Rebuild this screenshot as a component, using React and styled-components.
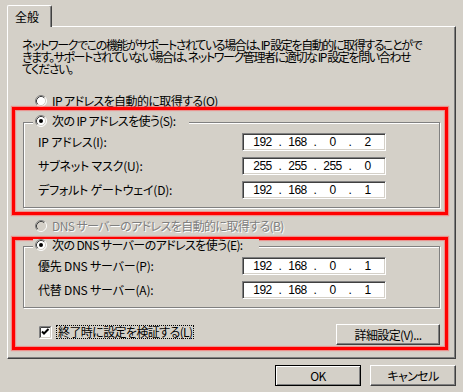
import React from "react";
import styled, { createGlobalStyle } from "styled-components";

const GlobalStyle = createGlobalStyle`
	html, body {
		margin: 0;
		background: #d4d0c8;
	}
	body {
		font-family: "Noto Sans CJK JP", "Noto Sans", sans-serif;
		font-size: 12px;
		line-height: 12px;
		color: #000;
		font-feature-settings: "palt";
		letter-spacing: -0.6px;
	}
`;

const Dialog = styled.div`
	width: 463px;
	height: 392px;
	box-sizing: border-box;
	padding: 5px 0 0 7px;
`;

const TabStrip = styled.div`
	display: flex;
	height: 21px;
	position: relative;
	z-index: 1;
`;

const Tab = styled.div`
	width: 45px;
	height: 22px;
	box-sizing: border-box;
	background: #d4d0c8;
	border-top: 1px solid #fff;
	border-left: 1px solid #fff;
	border-right: 1px solid #404040;
	border-radius: 2px 2px 0 0;
	box-shadow: inset -1px 0 0 #808080;
	padding: 5px 0 0 7px;
	letter-spacing: 0;
`;

const Panel = styled.div`
	width: 449px;
	height: 333px;
	box-sizing: border-box;
	border-top: 1px solid #fff;
	border-left: 1px solid #fff;
	border-right: 1px solid #404040;
	border-bottom: 1px solid #404040;
	box-shadow: inset -1px -1px 0 #808080;
	display: flex;
	flex-direction: column;
	align-items: flex-start;
`;

const Description = styled.p`
	margin: 12px 0 0 14px;
	white-space: nowrap;
	line-height: 12px;
	letter-spacing: -1.4px;
`;

const OptionRow = styled.div`
	display: flex;
	align-items: center;
	gap: 5px;
	height: 12px;
	margin: ${(p) => p.$top}px 0 0 27px;
	white-space: nowrap;
	color: ${(p) => (p.$disabled ? "#808080" : "#000")};
	text-shadow: ${(p) => (p.$disabled ? "1px 1px 0 #fff" : "none")};
`;

const RedFrame = styled.div`
	margin: ${(p) => p.$top}px 0 0 4px;
	width: 436px;
	box-sizing: border-box;
	border: 3px solid #ff0000;
	box-shadow: 0 0 1px 1px rgba(255, 90, 90, 0.55),
		inset 0 0 1px 1px rgba(255, 90, 90, 0.55);
	display: flex;
	flex-direction: column;
`;

const Group = styled.div`
	position: relative;
	margin: ${(p) => p.$top}px 5px ${(p) => p.$bottom}px 8px;
	border: 1px solid #808080;
	box-shadow: inset 1px 1px 0 #fff, 1px 1px 0 #fff;
	padding: 10px 0 8px 14px;
	display: flex;
	flex-direction: column;
	gap: 6px;
`;

const Legend = styled.div`
	position: absolute;
	top: -8px;
	left: 9px;
	width: ${(p) => p.$width}px;
	height: 12px;
	box-sizing: border-box;
	padding-left: 2px;
	background: #d4d0c8;
	display: flex;
	align-items: center;
	gap: 5px;
	white-space: nowrap;
`;

const FieldRow = styled.div`
	display: flex;
	align-items: center;
	height: 18px;
`;

const FieldLabel = styled.span`
	width: 204px;
	white-space: nowrap;
	letter-spacing: -0.2px;
`;

const IpField = styled.div`
	width: 144px;
	height: 18px;
	box-sizing: border-box;
	background: #fff;
	border-top: 1px solid #808080;
	border-left: 1px solid #808080;
	border-bottom: 1px solid #fff;
	border-right: 1px solid #fff;
	box-shadow: inset 1px 1px 0 #404040, inset -1px -1px 0 #d4d0c8;
	display: flex;
	align-items: center;
	padding-left: 2px;
	font-family: "Liberation Sans", sans-serif;
	font-size: 12px;
	letter-spacing: -0.5px;
`;

const Octet = styled.span`
	flex: 1;
	text-align: center;
`;

const Dot = styled.span`
	width: 0;
	display: flex;
	justify-content: center;
`;

const Footer = styled.div`
	display: flex;
	justify-content: space-between;
	align-items: flex-start;
	height: 21px;
	margin: 16px 5px 2px 24px;
`;

const CheckLine = styled.label`
	display: flex;
	align-items: center;
	gap: 4px;
	margin-top: 1px;
`;

const CheckText = styled.span`
	border: 1px dotted #000;
	padding: 0 1px;
	line-height: 12px;
	white-space: nowrap;
`;

const Button = styled.button`
	width: ${(p) => p.$width}px;
	height: 21px;
	box-sizing: border-box;
	padding: 0;
	background: #d4d0c8;
	font: inherit;
	letter-spacing: inherit;
	font-feature-settings: inherit;
	color: #000;
	border: 1px solid;
	border-color: ${(p) => (p.$default ? "#000" : "#fff #404040 #404040 #fff")};
	box-shadow: ${(p) =>
		p.$default
			? "inset 1px 1px 0 #fff, inset -1px -1px 0 #808080"
			: "inset -1px -1px 0 #808080"};
`;

const ButtonBar = styled.div`
	width: 449px;
	display: flex;
	justify-content: flex-end;
	gap: 9px;
	margin-top: 6px;
`;

const Radio = ({ checked, disabled }) => (
	<svg width="12" height="12" viewBox="0 0 12 12">
		<circle cx="6" cy="6" r="5" fill={disabled ? "#d4d0c8" : "#fff"} />
		<path d="M2.11 9.89 A5.5 5.5 0 0 1 9.89 2.11" fill="none" stroke="#808080" />
		<path d="M9.89 2.11 A5.5 5.5 0 0 1 2.11 9.89" fill="none" stroke="#fff" />
		<path d="M2.82 9.18 A4.5 4.5 0 0 1 9.18 2.82" fill="none" stroke="#404040" />
		<path d="M9.18 2.82 A4.5 4.5 0 0 1 2.82 9.18" fill="none" stroke="#d4d0c8" />
		{checked && <circle cx="6" cy="6" r="2" fill="#000" />}
	</svg>
);

const CheckBox = () => (
	<svg width="13" height="13" viewBox="0 0 13 13">
		<rect x="0" y="0" width="13" height="13" fill="#fff" />
		<path d="M0.5 12.5 V0.5 H12.5" fill="none" stroke="#808080" />
		<path d="M1.5 11.5 V1.5 H11.5" fill="none" stroke="#404040" />
		<path d="M0.5 12.5 H12.5 V0.5" fill="none" stroke="#fff" />
		<path d="M1.5 11.5 H11.5 V1.5" fill="none" stroke="#d4d0c8" />
		<path d="M3 5.5 L5 7.5 L9.5 3" fill="none" stroke="#000" strokeWidth="2" />
	</svg>
);

const Ip = ({ value }) => {
	const parts = value.split(".");
	return (
		<IpField>
			{parts.map((part, i) => (
				<React.Fragment key={i}>
					{i > 0 && <Dot>.</Dot>}
					<Octet>{part}</Octet>
				</React.Fragment>
			))}
		</IpField>
	);
};

const ipRows = [
	["IP アドレス(I):", "192.168.0.2"],
	["サブネット マスク(U):", "255.255.255.0"],
	["デフォルト ゲートウェイ(D):", "192.168.0.1"],
];

const dnsRows = [
	["優先 DNS サーバー(P):", "192.168.0.1"],
	["代替 DNS サーバー(A):", "192.168.0.1"],
];

const App = () => {
	return (
		<>
			<GlobalStyle />
			<Dialog>
				<TabStrip>
					<Tab>全般</Tab>
				</TabStrip>
				<Panel>
					<Description>
						ネットワークでこの機能がサポートされている場合は、IP 設定を自動的に取得することがで
						<br />
						きます。サポートされていない場合は、ネットワーク管理者に適切な IP 設定を問い合わせ
						<br />
						てください。
					</Description>

					<OptionRow $top={20}>
						<Radio />
						IP アドレスを自動的に取得する(O)
					</OptionRow>

					<RedFrame $top={0}>
						<Group $top={12} $bottom={4}>
							<Legend $width={156}>
								<Radio checked />
								次の IP アドレスを使う(S):
							</Legend>
							{ipRows.map(([label, ip]) => (
								<FieldRow key={label}>
									<FieldLabel>{label}</FieldLabel>
									<Ip value={ip} />
								</FieldRow>
							))}
						</Group>
					</RedFrame>

					<OptionRow $top={5} $disabled>
						<Radio disabled />
						DNS サーバーのアドレスを自動的に取得する(B)
					</OptionRow>

					<RedFrame $top={5}>
						<Group $top={6} $bottom={0}>
							<Legend $width={226}>
								<Radio checked />
								次の DNS サーバーのアドレスを使う(E):
							</Legend>
							{dnsRows.map(([label, ip]) => (
								<FieldRow key={label}>
									<FieldLabel>{label}</FieldLabel>
									<Ip value={ip} />
								</FieldRow>
							))}
						</Group>
						<Footer>
							<CheckLine>
								<CheckBox />
								<CheckText>終了時に設定を検証する(L)</CheckText>
							</CheckLine>
							<Button $width={104}>詳細設定(V)...</Button>
						</Footer>
					</RedFrame>
				</Panel>
				<ButtonBar>
					<Button $width={86} $default>
						OK
					</Button>
					<Button $width={86}>キャンセル</Button>
				</ButtonBar>
			</Dialog>
		</>
	);
};

export default App;
